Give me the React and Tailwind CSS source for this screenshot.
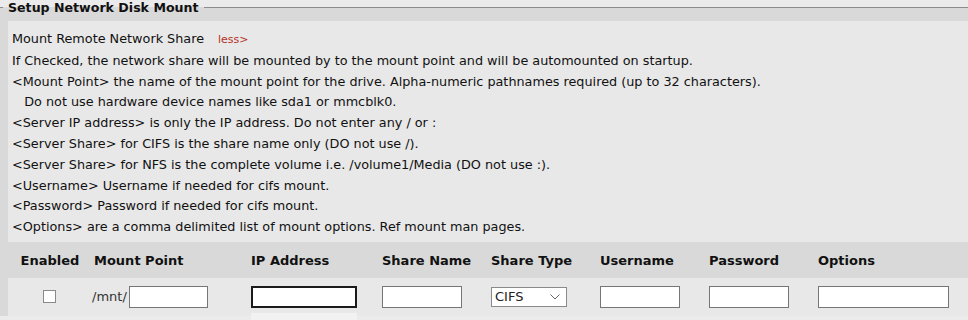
const helpLines = [
  "If Checked, the network share will be mounted by to the mount point and will be automounted on startup.",
  "<Mount Point> the name of the mount point for the drive. Alpha-numeric pathnames required (up to 32 characters).",
  "   Do not use hardware device names like sda1 or mmcblk0.",
  "<Server IP address> is only the IP address. Do not enter any / or :",
  "<Server Share> for CIFS is the share name only (DO not use /).",
  "<Server Share> for NFS is the complete volume i.e. /volume1/Media (DO not use :).",
  "<Username> Username if needed for cifs mount.",
  "<Password> Password if needed for cifs mount.",
  "<Options> are a comma delimited list of mount options. Ref mount man pages.",
];

const cols = "grid grid-cols-[84px_157px_131px_109px_109px_109px_109px_1fr]";

function TextBox({ w = "w-[80px]", focused = false }) {
  return (
    <input
      type="text"
      className={
        "h-[22px] bg-white px-1 text-[13px] outline-none " +
        w +
        (focused ? " border-2 border-[#1b1b1b]" : " border border-[#767676]")
      }
    />
  );
}

export default function App() {
  return (
    <div
      className="h-[320px] w-[968px] overflow-hidden bg-[#ebebeb] text-[#111]"
      style={{ fontFamily: "'DejaVu Sans', Verdana, sans-serif" }}
    >
      <fieldset className="border-t border-[#8c8c8c] bg-[#d9d9d9]">
        <legend className="ml-[3px] px-[5px] text-[12.6px] font-bold leading-[15px]">
          Setup Network Disk Mount
        </legend>

        {/* help panel */}
        <div className="ml-[8px] mt-[6px] bg-[#e8e8e8] pb-[4px] pl-[4px] pt-[8px] text-[12.8px] leading-[20.8px]">
          <div>
            Mount Remote Network Share
            <span className="ml-[14px] text-[11px] text-[#b5311f]">less&gt;</span>
          </div>
          {helpLines.map((line, i) => (
            <div key={i} className="whitespace-pre">
              {line}
            </div>
          ))}
        </div>

        {/* table header */}
        <div className={cols + " ml-[8px] h-[36px] items-center pt-[2px] text-[13px] font-bold"}>
          <div className="text-center">Enabled</div>
          <div className="pl-[2px]">Mount Point</div>
          <div className="pl-[2px]">IP Address</div>
          <div className="pl-[2px]">Share Name</div>
          <div className="pl-[2px]">Share Type</div>
          <div className="pl-[2px]">Username</div>
          <div className="pl-[2px]">Password</div>
          <div className="pl-[2px]">Options</div>
        </div>

        {/* data row */}
        <div className={cols + " relative ml-[8px] h-[38px] items-center bg-[#e8e8e8] text-[13px]"}>
          <div className="flex justify-center">
            <div className="ml-[-1px] h-[13px] w-[13px] border border-[#8a8a8a] bg-white" />
          </div>
          <div className="flex items-center">
            <span className="text-[13px] text-[#333]">/mnt/</span>
            <span className="ml-[2px]">
              <TextBox w="w-[79px]" />
            </span>
          </div>
          <div className="pl-[2px]">
            <TextBox w="w-[106px]" focused />
          </div>
          <div className="pl-[2px]">
            <TextBox />
          </div>
          <div className="pl-[2px]">
            <div className="flex h-[20px] w-[76px] items-center justify-between border border-[#8a8a8a] bg-white pl-[3px] pr-[6px] text-[13px] text-[#222]">
              <span>CIFS</span>
              <svg width="10" height="6" viewBox="0 0 10 6" fill="none">
                <path d="M0.5 0.5 L5 5 L9.5 0.5" stroke="#666" strokeWidth="1" />
              </svg>
            </div>
          </div>
          <div className="pl-[2px]">
            <TextBox />
          </div>
          <div className="pl-[2px]">
            <TextBox />
          </div>
          <div className="pl-[2px]">
            <TextBox w="w-[131px]" />
          </div>
          {/* autofill popup peeking under the IP field */}
          <div className="absolute left-[243px] top-[35px] h-[12px] w-[106px] bg-[#f2f2f2]" />
        </div>
      </fieldset>
    </div>
  );
}
